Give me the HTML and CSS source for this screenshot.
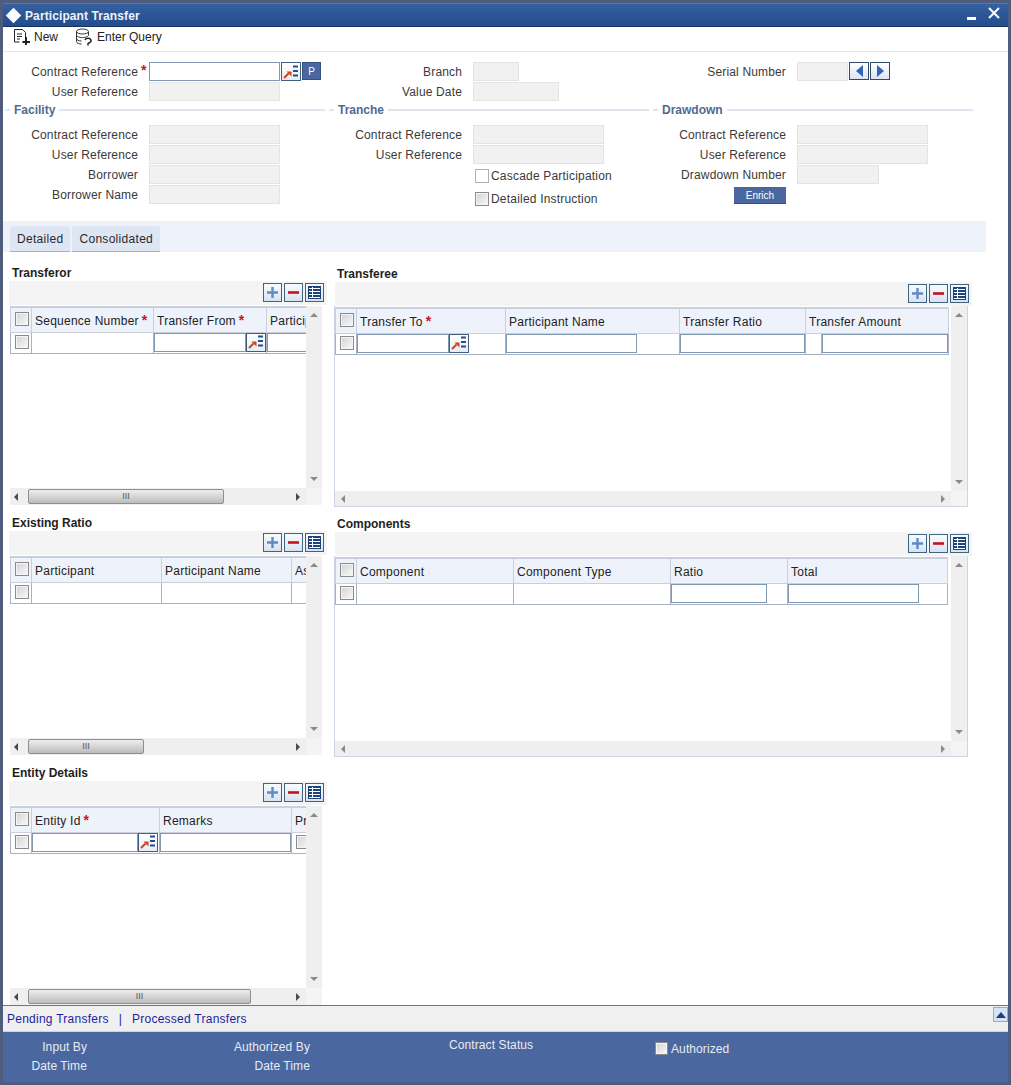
FILE: index.html
```html
<!DOCTYPE html>
<html lang="en">
<head>
  <meta charset="UTF-8">
  <title>Participant Transfer</title>
  <link rel="stylesheet" href="styles.css">
</head>
<body>
  <svg class="icon-defs" xmlns="http://www.w3.org/2000/svg">
    <symbol id="i-lov" viewBox="0 0 18 18">
      <path d="M2 15 6.500 10.500" fill="none" stroke="#d8401c" stroke-width="2"/>
      <path d="M4.500 8.500h5v5z" fill="#d8401c"/>
      <path d="M11 3.500h5M11 8h5M11 12.500h5" fill="none" stroke="#1f4f8c" stroke-width="1.800"/>
    </symbol>
    <symbol id="i-plus" viewBox="0 0 17 17">
      <path d="M8.500 3v11M3 8.500h11" stroke="#5f8ac6" stroke-width="2.400"/>
    </symbol>
    <symbol id="i-minus" viewBox="0 0 17 17">
      <path d="M3 8.500h11" stroke="#c8101c" stroke-width="2.600"/>
    </symbol>
    <symbol id="i-list" viewBox="0 0 17 17">
      <path d="M2 2h13v13H2z" fill="#1c4478"/>
      <path d="M3 4.500h11M3 7.500h11M3 10.500h11M3 13.500h11" stroke="#fff"/>
      <path d="M6.500 3v11" stroke="#fff"/>
    </symbol>
  </svg>

  <div class="window">
    <div class="titlebar">
      <span class="diamond"></span>
      <span class="title-text">Participant Transfer</span>
      <span class="minimize"></span>
      <svg class="close" width="12" height="12" viewBox="0 0 12 12"><path d="M1 1l10 10M11 1 1 11" stroke="#fff" stroke-width="2"/></svg>
    </div>

    <div class="toolbar">
      <span class="tool">
        <svg width="20" height="18" viewBox="0 0 20 18"><path d="M1.500 14V1.500h8l3 3V14h-3M1.500 14h5M4 6h5M4 8.500h5M4 11h3" fill="none" stroke="#222"/><path d="M13 9v8M9.500 14h7.500" stroke="#222" stroke-width="2"/></svg>
        New
      </span>
      <span class="tool">
        <svg width="18" height="18" viewBox="0 0 18 18"><ellipse cx="7.500" cy="3.500" rx="6" ry="2.500" fill="none" stroke="#333"/><path d="M1.500 3.500v10c0 1.500 2.500 2.500 5 2.500M1.500 7c0 1.500 2.500 2.500 6 2.500s6-1 6-2.500v-3M1.500 10.500c0 1.500 2.500 2.500 5 2.500" fill="none" stroke="#333"/><path d="M10 12c1-2.500 5-2.500 6 0 .5 2-1.500 3-3 3.500M13 15v2.500" fill="none" stroke="#222" stroke-width="1.500"/></svg>
        Enter Query
      </span>
    </div>

    <div class="head">
      <div class="head-col">
        <div class="field">
          <label>Contract Reference</label><span class="req">*</span>
          <input class="inp w131" type="text">
          <button class="lov lov-head"><svg width="18" height="18"><use href="#i-lov"/></svg></button>
          <button class="btn-p">P</button>
        </div>
        <div class="field">
          <label>User Reference</label><span></span>
          <span class="off w131"></span>
        </div>
      </div>
      <div class="head-col">
        <div class="field">
          <label>Branch</label><span></span>
          <span class="off w46"></span>
        </div>
        <div class="field">
          <label>Value Date</label><span></span>
          <span class="off w86"></span>
        </div>
      </div>
      <div class="head-col">
        <div class="field">
          <label>Serial Number</label><span></span>
          <span class="off w51"></span>
          <button class="nav-btn"><span class="tri-left"></span></button>
          <button class="nav-btn"><span class="tri-right"></span></button>
        </div>
      </div>

      <div class="head-col">
        <div class="legend"><span>Facility</span></div>
        <div class="field"><label>Contract Reference</label><span></span><span class="off w131"></span></div>
        <div class="field"><label>User Reference</label><span></span><span class="off w131"></span></div>
        <div class="field"><label>Borrower</label><span></span><span class="off w131"></span></div>
        <div class="field"><label>Borrower Name</label><span></span><span class="off w131"></span></div>
      </div>
      <div class="head-col">
        <div class="legend"><span>Tranche</span></div>
        <div class="field"><label>Contract Reference</label><span></span><span class="off w131"></span></div>
        <div class="field"><label>User Reference</label><span></span><span class="off w131"></span></div>
        <div class="check-line first"><span class="check plain"></span>Cascade Participation</div>
        <div class="check-line"><span class="check"></span>Detailed Instruction</div>
      </div>
      <div class="head-col">
        <div class="legend"><span>Drawdown</span></div>
        <div class="field"><label>Contract Reference</label><span></span><span class="off w131"></span></div>
        <div class="field"><label>User Reference</label><span></span><span class="off w131"></span></div>
        <div class="field"><label>Drawdown Number</label><span></span><span class="off w82"></span></div>
        <button class="enrich">Enrich</button>
      </div>
    </div>

    <div class="tabs">
      <span class="tab">Detailed</span>
      <span class="tab">Consolidated</span>
    </div>

    <div class="panels">
      <div class="panel-col">
        <section class="block">
          <h3>Transferor</h3>
          <div class="grid-tools">
            <button class="tool-btn"><svg width="17" height="17"><use href="#i-plus"/></svg></button>
            <button class="tool-btn"><svg width="17" height="17"><use href="#i-minus"/></svg></button>
            <button class="tool-btn"><svg width="17" height="17"><use href="#i-list"/></svg></button>
          </div>
          <div class="view">
            <div class="view-main">
              <table class="data">
                <tr>
                  <th class="c-check"><span class="check"></span></th>
                  <th class="c122">Sequence Number<span class="req">*</span></th>
                  <th class="c113">Transfer From<span class="req">*</span></th>
                  <th class="c113">Participant</th>
                </tr>
                <tr>
                  <td><span class="check"></span></td>
                  <td></td>
                  <td><input class="inp w92" type="text"><button class="lov"><svg width="18" height="18"><use href="#i-lov"/></svg></button></td>
                  <td><input class="inp w92" type="text"></td>
                </tr>
              </table>
            </div>
            <div class="vbar"><span class="arrow-up"></span><span class="arrow-down"></span></div>
            <div class="hbar"><span class="arrow-left"></span><span class="thumb t196">III</span><span class="arrow-right"></span></div>
            <div class="corner"></div>
          </div>
        </section>

        <section class="block">
          <h3>Existing Ratio</h3>
          <div class="grid-tools">
            <button class="tool-btn"><svg width="17" height="17"><use href="#i-plus"/></svg></button>
            <button class="tool-btn"><svg width="17" height="17"><use href="#i-minus"/></svg></button>
            <button class="tool-btn"><svg width="17" height="17"><use href="#i-list"/></svg></button>
          </div>
          <div class="view">
            <div class="view-main">
              <table class="data">
                <tr>
                  <th class="c-check"><span class="check"></span></th>
                  <th class="c130">Participant</th>
                  <th class="c130">Participant Name</th>
                  <th class="c113">Asset Ratio</th>
                </tr>
                <tr>
                  <td><span class="check"></span></td>
                  <td></td>
                  <td></td>
                  <td></td>
                </tr>
              </table>
            </div>
            <div class="vbar"><span class="arrow-up"></span><span class="arrow-down"></span></div>
            <div class="hbar"><span class="arrow-left"></span><span class="thumb t116">III</span><span class="arrow-right"></span></div>
            <div class="corner"></div>
          </div>
        </section>

        <section class="block">
          <h3>Entity Details</h3>
          <div class="grid-tools">
            <button class="tool-btn"><svg width="17" height="17"><use href="#i-plus"/></svg></button>
            <button class="tool-btn"><svg width="17" height="17"><use href="#i-minus"/></svg></button>
            <button class="tool-btn"><svg width="17" height="17"><use href="#i-list"/></svg></button>
          </div>
          <div class="view">
            <div class="view-main">
              <table class="data">
                <tr>
                  <th class="c-check"><span class="check"></span></th>
                  <th class="c128">Entity Id<span class="req">*</span></th>
                  <th class="c132">Remarks</th>
                  <th class="c113">Primary</th>
                </tr>
                <tr>
                  <td><span class="check"></span></td>
                  <td><input class="inp w106" type="text"><button class="lov"><svg width="18" height="18"><use href="#i-lov"/></svg></button></td>
                  <td><input class="inp w131" type="text"></td>
                  <td><span class="check"></span></td>
                </tr>
              </table>
            </div>
            <div class="vbar"><span class="arrow-up"></span><span class="arrow-down"></span></div>
            <div class="hbar"><span class="arrow-left"></span><span class="thumb t223">III</span><span class="arrow-right"></span></div>
            <div class="corner"></div>
          </div>
        </section>
      </div>

      <div class="panel-col right">
        <section class="block">
          <h3>Transferee</h3>
          <div class="grid-tools">
            <button class="tool-btn"><svg width="17" height="17"><use href="#i-plus"/></svg></button>
            <button class="tool-btn"><svg width="17" height="17"><use href="#i-minus"/></svg></button>
            <button class="tool-btn"><svg width="17" height="17"><use href="#i-list"/></svg></button>
          </div>
          <div class="view wide">
            <div class="view-main">
              <table class="data">
                <tr>
                  <th class="c-check"><span class="check"></span></th>
                  <th class="c149">Transfer To<span class="req">*</span></th>
                  <th class="c174">Participant Name</th>
                  <th class="c124">Transfer Ratio</th>
                  <th class="c143" colspan="2">Transfer Amount</th>
                </tr>
                <tr>
                  <td><span class="check"></span></td>
                  <td><input class="inp w92" type="text"><button class="lov"><svg width="18" height="18"><use href="#i-lov"/></svg></button></td>
                  <td><input class="inp w131" type="text"></td>
                  <td><input class="inp w125" type="text"></td>
                  <td class="c-spin"></td>
                  <td><input class="inp w126" type="text"></td>
                </tr>
              </table>
            </div>
            <div class="vbar"><span class="arrow-up"></span><span class="arrow-down"></span></div>
            <div class="hbar"><span class="arrow-left"></span><span class="arrow-right"></span></div>
            <div class="corner"></div>
          </div>
        </section>

        <section class="block">
          <h3>Components</h3>
          <div class="grid-tools">
            <button class="tool-btn"><svg width="17" height="17"><use href="#i-plus"/></svg></button>
            <button class="tool-btn"><svg width="17" height="17"><use href="#i-minus"/></svg></button>
            <button class="tool-btn"><svg width="17" height="17"><use href="#i-list"/></svg></button>
          </div>
          <div class="view wide">
            <div class="view-main">
              <table class="data">
                <tr>
                  <th class="c-check"><span class="check"></span></th>
                  <th class="c157">Component</th>
                  <th class="c157">Component Type</th>
                  <th class="c117">Ratio</th>
                  <th class="c160">Total</th>
                </tr>
                <tr>
                  <td><span class="check"></span></td>
                  <td></td>
                  <td></td>
                  <td><input class="inp w96" type="text"></td>
                  <td><input class="inp w131" type="text"></td>
                </tr>
              </table>
            </div>
            <div class="vbar"><span class="arrow-up"></span><span class="arrow-down"></span></div>
            <div class="hbar"><span class="arrow-left"></span><span class="arrow-right"></span></div>
            <div class="corner"></div>
          </div>
        </section>
      </div>
    </div>

    <div class="links">
      <a href="#">Pending Transfers</a>
      <span class="sep">|</span>
      <a href="#">Processed Transfers</a>
      <button class="collapse"><span></span></button>
    </div>

    <div class="audit">
      <div class="audit-col"><span>Input By</span><span>Date Time</span></div>
      <div class="audit-col"><span>Authorized By</span><span>Date Time</span></div>
      <div class="audit-status">Contract Status</div>
      <div class="audit-auth"><span class="check"></span>Authorized</div>
    </div>
  </div>
</body>
</html>
```

FILE: styles.css
```css
* {
  margin: 0;
  padding: 0;
  box-sizing: border-box;
}

body {
  font-family: "Liberation Sans", Arial, sans-serif;
  font-size: 12px;
  color: #2a2a2a;
  background-color: #4f5c7e;
}

.icon-defs {
  display: none;
}

.window {
  width: 1011px;
  height: 1085px;
  border: 3px solid #4f5c7e;
  background-color: white;
  display: flex;
  flex-direction: column;
  overflow: hidden;
}

/* title bar */
.titlebar {
  height: 24px;
  flex: none;
  display: flex;
  align-items: center;
  color: white;
  background: linear-gradient(#34619f, #244c8d);
  border-top: 1px solid #4f78b0;
  border-bottom: 1px solid #16335f;
}

.diamond {
  width: 11px;
  height: 11px;
  margin-left: 5px;
  background-color: white;
  transform: rotate(45deg);
}

.title-text {
  margin-left: 6px;
  margin-top: 1px;
  font-size: 12px;
  letter-spacing: 0.1px;
  font-weight: bold;
  color: #eef2f8;
}

.minimize {
  width: 9px;
  height: 3px;
  background-color: white;
  margin-left: auto;
  margin-top: 6px;
}

.close {
  margin-left: 12px;
  margin-right: 8px;
  margin-top: -4px;
}

/* toolbar */
.toolbar {
  height: 25px;
  flex: none;
  display: flex;
  align-items: center;
  padding: 0 0 4px 10px;
  gap: 17px;
  border-bottom: 1px solid #e6e6e6;
}

.tool {
  display: flex;
  align-items: center;
  gap: 1px;
  color: #222;
}

.tool + .tool svg {
  margin-right: 3px;
}

/* head form */
.head {
  height: 169px;
  flex: none;
  padding: 10px 0 0 2px;
  display: grid;
  grid-template-columns: repeat(3, 324px);
  grid-template-rows: 40px 1fr;
}

.field {
  height: 20px;
  display: flex;
  align-items: flex-start;
}

.field label {
  width: 133px;
  text-align: right;
  padding-top: 1px;
  line-height: 19px;
  letter-spacing: 0.15px;
  color: #3a3a3a;
}

.field > span:nth-child(2) {
  width: 11px;
  flex: none;
}

.req {
  color: #c8141c;
  font-weight: bold;
  font-size: 14px;
  line-height: 17px;
  margin-left: 3px;
}

.field .req {
  margin-left: 0;
  padding-left: 3px;
}

.inp {
  height: 19px;
  border: 1px solid #7f99b2;
  background-color: white;
  display: inline-block;
  vertical-align: top;
  outline: none;
}

.off {
  height: 19px;
  background-color: #f1f1f1;
  border: 1px solid #e4e4e4;
  flex: none;
}

.w46 { width: 46px; }
.w51 { width: 51px; }
.w82 { width: 82px; }
.w86 { width: 86px; }
.w92 { width: 92px; }
.w96 { width: 96px; }
.w106 { width: 106px; }
.w125 { width: 125px; }
.w126 { width: 126px; }
.w131 { width: 131px; }

.lov {
  width: 20px;
  height: 19px;
  border: 1px solid #3f5f7c;
  background: linear-gradient(#ffffff, #e6ecf4);
  display: inline-flex;
  align-items: center;
  justify-content: center;
  vertical-align: top;
}

.lov-head {
  margin-left: 1px;
}

.btn-p {
  width: 19px;
  height: 18px;
  margin-left: 1px;
  border: 1px solid #34527f;
  background-color: #4a689f;
  color: white;
  font-family: inherit;
  font-size: 10px;
}

.nav-btn {
  width: 20px;
  height: 18px;
  margin-left: 1px;
  border: 1px solid #2f4b66;
  background: linear-gradient(#ffffff, #dbe5f1);
  display: flex;
  align-items: center;
  justify-content: center;
}

.tri-left,
.tri-right {
  border-top: 6px solid transparent;
  border-bottom: 6px solid transparent;
}

.tri-left {
  border-right: 7px solid #2f66b5;
}

.tri-right {
  border-left: 7px solid #2f66b5;
}

.legend {
  height: 23px;
  width: 320px;
  font-weight: bold;
  color: #4f6a93;
  line-height: 16px;
  background: linear-gradient(#dfe6f0, #dfe6f0) no-repeat 0 7px / 100% 2px;
}

.legend span {
  background-color: white;
  padding: 0 4px;
  margin-left: 5px;
}

.check-line {
  display: flex;
  align-items: center;
  height: 23px;
  padding-left: 146px;
  letter-spacing: 0.2px;
  color: #3a3a3a;
}

.check-line.first {
  margin-top: -1px;
}

.check {
  display: inline-block;
  width: 14px;
  height: 14px;
  border: 1px solid #8b8b8b;
  background: linear-gradient(135deg, #d2d2d2, #fafafa);
  box-shadow: inset 0 0 0 1px #f4f4f4;
  flex: none;
}

.check.plain {
  background: white;
  border-color: #b0b0b0;
  box-shadow: none;
}

.check-line .check {
  margin-right: 2px;
}

.enrich {
  display: block;
  width: 52px;
  height: 17px;
  margin: 2px 0 0 81px;
  border: none;
  border-bottom: 1px solid #34527f;
  background-color: #4a689f;
  color: white;
  font-family: inherit;
  font-size: 10px;
}

/* tabs */
.tabs {
  height: 31px;
  width: 983px;
  flex: none;
  background-color: #eef3fb;
  padding: 5px 0 0 7px;
  display: flex;
  gap: 2px;
}

.tab {
  padding: 0 7px;
  line-height: 26px;
  height: 26px;
  background-color: #dde6f2;
  border-bottom: 1px solid #9db2cf;
  border-radius: 3px 3px 0 0;
  letter-spacing: 0.3px;
}

/* grids */
.panels {
  height: 753px;
  flex: none;
  padding: 13px 0 0 6px;
  display: flex;
  gap: 8px;
  overflow: hidden;
}

.panel-col {
  width: 318px;
  flex: none;
}

.panel-col.right {
  width: 637px;
  padding-top: 1px;
}

.block {
  height: 250px;
}

.block h3 {
  height: 16px;
  padding-left: 3px;
  font-size: 12px;
  line-height: 16px;
  color: #1e1e1e;
}

.right .block h3 {
  padding-left: 2px;
}

.grid-tools {
  height: 24px;
  background-color: #f4f4f4;
  display: flex;
  justify-content: flex-end;
  align-items: center;
  gap: 2px;
  padding: 0 3px 1px 0;
}

.tool-btn {
  width: 19px;
  height: 19px;
  border: 1px solid #3f6480;
  background: linear-gradient(#f8fbfe, #d8e3f0);
  display: flex;
  align-items: center;
  justify-content: center;
}

.view {
  width: 312px;
  height: 199px;
  margin: 1px 0 0 1px;
  display: grid;
  grid-template-columns: 296px 16px;
  grid-template-rows: 182px 17px;
}

.view.wide {
  width: 634px;
  height: 201px;
  margin: 0 0 0 -1px;
  border: 1px solid #ccd5e6;
  border-top: none;
  grid-template-columns: 616px 16px;
  grid-template-rows: 185px 15px;
}

.view-main {
  overflow: hidden;
}

.wide .data {
  margin-top: 1px;
}

.data {
  border-collapse: collapse;
  table-layout: fixed;
  width: max-content;
}

.data th {
  height: 25px;
  background-color: #eef2fb;
  border: 1px solid #c9cfdd;
  border-top-width: 2px;
  font-weight: normal;
  text-align: left;
  padding: 2px 0 0 3px;
  letter-spacing: 0.25px;
  white-space: nowrap;
  overflow: hidden;
  color: #222;
}

.data td {
  height: 21px;
  border: 1px solid #a8b2c2;
  border-top-color: #8ea0b4;
  padding: 0;
  white-space: nowrap;
  overflow: hidden;
  vertical-align: top;
}

.data .check {
  display: block;
  margin: 2px 0 0 4px;
}

.data th.c-check {
  padding: 0;
}

.data th .check {
  margin: 0 0 2px 4px;
}

.c-check { width: 21px; }
.c113 { width: 113px; }
.c117 { width: 117px; }
.c122 { width: 122px; }
.c124 { width: 124px; }
.c128 { width: 128px; }
.c130 { width: 130px; }
.c132 { width: 132px; }
.c143 { width: 143px; }
.c149 { width: 149px; }
.c157 { width: 157px; }
.c160 { width: 160px; }
.c174 { width: 174px; }
.c-spin { width: 16px; }

.vbar {
  background-color: #efefef;
  display: flex;
  flex-direction: column;
  justify-content: space-between;
  align-items: center;
  padding: 7px 0;
}

.hbar {
  background-color: #efefef;
  display: flex;
  align-items: center;
  justify-content: space-between;
  padding: 0 6px 0 4px;
}

.wide .hbar {
  padding: 0 6px 0 6px;
}

.corner {
  background-color: #f4f4f4;
}

.arrow-up,
.arrow-down {
  border-left: 4px solid transparent;
  border-right: 4px solid transparent;
}

.arrow-up {
  border-bottom: 4px solid #8a8a8a;
}

.arrow-down {
  border-top: 4px solid #8a8a8a;
}

.arrow-left,
.arrow-right {
  border-top: 4px solid transparent;
  border-bottom: 4px solid transparent;
}

.arrow-left {
  border-right: 4px solid #4a4a4a;
}

.arrow-right {
  border-left: 4px solid #4a4a4a;
}

.wide .arrow-left {
  border-right-color: #8a8a8a;
}

.wide .arrow-right {
  border-left-color: #8a8a8a;
}

.thumb {
  height: 15px;
  margin-left: 10px;
  margin-right: auto;
  border: 1px solid #8a8f96;
  border-radius: 2px;
  background: linear-gradient(#eeeeee, #bcbcbc);
  text-align: center;
  font-size: 9px;
  line-height: 12px;
  color: #555;
}

.t116 { width: 116px; }
.t196 { width: 196px; }
.t223 { width: 223px; }

/* bottom */
.links {
  height: 27px;
  flex: none;
  display: flex;
  align-items: center;
  background-color: #f0f0f0;
  border-top: 1px solid #5a7aa3;
  border-bottom: 1px solid #c9d5e6;
  padding-left: 4px;
  letter-spacing: 0.25px;
}

.links a {
  color: #1f1f9e;
  text-decoration: none;
}

.sep {
  color: #1f1f9e;
  margin: 0 10px;
}

.collapse {
  width: 15px;
  height: 15px;
  margin-left: auto;
  margin-bottom: 8px;
  border: 1px solid #8eaed6;
  background-color: #d5e3f5;
  display: flex;
  align-items: center;
  justify-content: center;
}

.collapse span {
  border-left: 5px solid transparent;
  border-right: 5px solid transparent;
  border-bottom: 6px solid #1f3f78;
}

.audit {
  flex: 1;
  background-color: #4a679f;
  color: #e8ecf4;
  display: grid;
  grid-template-columns: 84px 223px 345px 1fr;
  letter-spacing: 0.1px;
}

.audit-col {
  display: flex;
  flex-direction: column;
  align-items: flex-end;
  gap: 5px;
  padding-top: 8px;
  line-height: 14px;
}

.audit-status {
  padding: 6px 0 0 139px;
  line-height: 14px;
}

.audit-auth {
  display: flex;
  align-items: flex-start;
  gap: 3px;
  padding-top: 10px;
  line-height: 14px;
}

.audit-auth .check {
  width: 13px;
  height: 13px;
}
```
